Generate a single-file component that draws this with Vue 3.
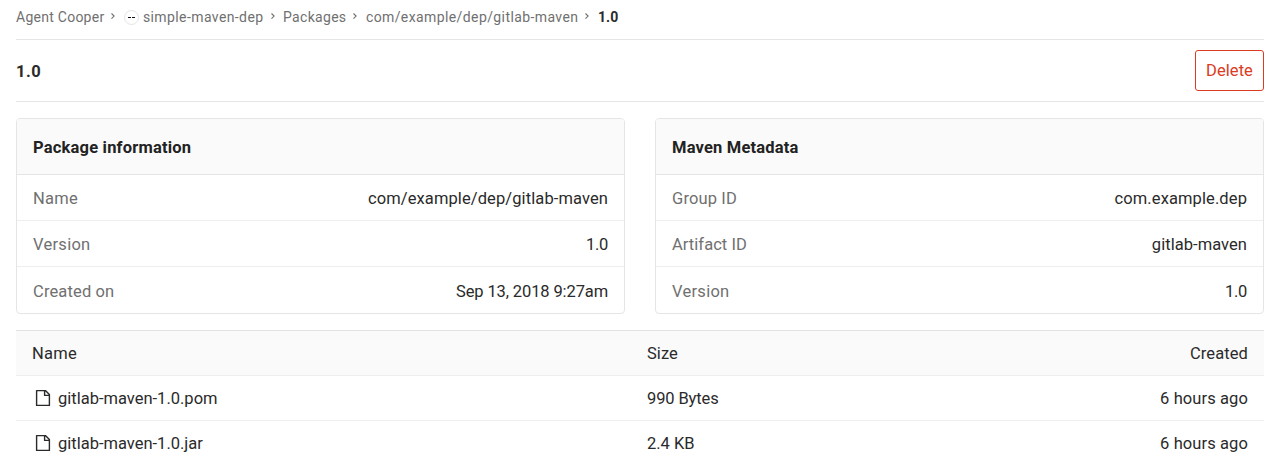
<script setup>
const crumbs = [['Agent Cooper', 'ls25'], ['simple-maven-dep', 'ls40'], ['Packages', 'ls30'], ['com/example/dep/gitlab-maven', 'ls40']]
const panels = [
  { title: 'Package information', rows: [['Name', 'ls50', 'com/example/dep/gitlab-maven', 'ls35'], ['Version', 'ls50', '1.0', 'ls0'], ['Created on', 'ls40', 'Sep 13, 2018 9:27am', 'ls15']] },
  { title: 'Maven Metadata', rows: [['Group ID', 'ls40', 'com.example.dep', 'ls35'], ['Artifact ID', 'ls30', 'gitlab-maven', 'ls30'], ['Version', 'ls50', '1.0', 'ls0']] },
]
const files = [['gitlab-maven-1.0.pom', '990 Bytes', '6 hours ago', 'ls15'], ['gitlab-maven-1.0.jar', '2.4 KB', '6 hours ago', 'ls25']]
</script>

<template>
  <main class="page">
    <nav class="crumbs">
      <template v-for="(c, i) in crumbs" :key="c[0]">
        <span v-if="i === 1" class="avatar"><svg width="13" height="13" viewBox="0 0 13 13"><path d="M3 6.5h3M7 6.5h3" /></svg></span>
        <span :class="c[1]">{{ c[0] }}</span>
        <svg class="chev" width="6" height="8" viewBox="0 0 6 8"><path d="M1.5 1.5 4.1 4.1 1.5 6.7" /></svg>
      </template>
      <strong>1.0</strong>
    </nav>
    <header class="head"><strong>1.0</strong><button>Delete</button></header>
    <div class="panels">
      <section v-for="p in panels" :key="p.title" class="panel">
        <h2>{{ p.title }}</h2>
        <div v-for="r in p.rows" :key="r[0]" class="row"><span :class="r[1]">{{ r[0] }}</span><b :class="r[3]">{{ r[2] }}</b></div>
      </section>
    </div>
    <div class="table">
      <div class="tr th"><span class="ls50">Name</span><span class="ls30">Size</span><span class="ls35">Created</span></div>
      <div v-for="f in files" :key="f[0]" class="tr">
        <span class="file"><svg width="16" height="18" viewBox="0 0 16 18"><path d="M1.6 1.6h8.8l4 4v10.8H1.6zM9.6 1.6v4.8h4.8" /></svg><span class="ls25">{{ f[0] }}</span></span>
        <span :class="f[3]">{{ f[1] }}</span><span class="ls35">{{ f[2] }}</span>
      </div>
    </div>
  </main>
</template>

<style>
body { margin: 0; background: #fff; overflow: hidden; }
</style>
<style scoped>
.page { --tight: .26px; box-sizing: border-box; height: 464px; overflow: hidden; padding: 0 16px; font: 16.5px/20px Roboto, sans-serif; color: #2a2a2a; }
.page * { box-sizing: border-box; }
.ls0 { letter-spacing: calc(0px - var(--tight)); }
.ls15 { letter-spacing: calc(.14px - var(--tight)); }
.ls25 { letter-spacing: calc(.26px - var(--tight)); }
.ls30 { letter-spacing: calc(.31px - var(--tight)); }
.ls35 { letter-spacing: calc(.36px - var(--tight)); }
.ls40 { letter-spacing: calc(.4px - var(--tight)); }
.ls50 { letter-spacing: calc(.54px - var(--tight)); }
.crumbs { --tight: 0px; display: flex; align-items: center; height: 40px; padding-bottom: 5px; border-bottom: 1px solid #e5e5e5; font-size: 14px; color: #707070; white-space: nowrap; }
.chev { margin: 0 7.5px 0 6px; position: relative; top: -1px; fill: none; stroke: #707070; stroke-width: 1.1; }
.avatar { display: flex; width: 15px; height: 15px; margin-right: 4px; border: 1px solid #e5e5e5; border-radius: 50%; }
.avatar svg { flex: none; }
.avatar path { stroke: #111; stroke-width: 1; }
.crumbs strong { color: #2a2a2a; letter-spacing: .15px; }
.head { display: flex; align-items: center; justify-content: space-between; height: 62px; border-bottom: 1px solid #e5e5e5; }
.head strong { padding-top: 2px; letter-spacing: .5px; }
button { width: 69px; height: 41px; padding: 0; background: #fff; border: 1px solid #db3b21; border-radius: 3px; color: #db3b21; font: inherit; letter-spacing: .05px; }
.panels { display: grid; grid-template-columns: 1fr 1fr; gap: 30px; margin-top: 16px; }
.panel { border: 1px solid #e5e5e5; border-radius: 4px; height: 196px; overflow: hidden; }
h2 { margin: 0; height: 56px; padding: 19px 16px 16px; font-size: 16.5px; line-height: 20px; letter-spacing: .19px; color: #222; background: #fafafa; border-bottom: 1px solid #e5e5e5; }
.row { display: flex; align-items: center; justify-content: space-between; height: 46px; padding: 2px 16px 0; border-bottom: 1px solid #eee; color: #707070; }
.row:last-child { height: 47px; border: 0; }
.row b { font-weight: 400; color: #2a2a2a; }
.table { margin-top: 16px; border-top: 1px solid #e1e2e6; }
.tr { display: grid; grid-template-columns: 615px 1fr 1fr; align-items: center; height: 45px; padding: 2px 16px 0; border-bottom: 1px solid #eee; }
.tr:last-child { border-bottom-color: transparent; }
.tr > :last-child { text-align: right; }
.th { background: #fafafa; }
.file { display: flex; align-items: center; }
.file svg { margin: -2px 7px 0 3px; fill: none; stroke: #2a2a2a; stroke-width: 1.4; stroke-linejoin: round; }
</style>
